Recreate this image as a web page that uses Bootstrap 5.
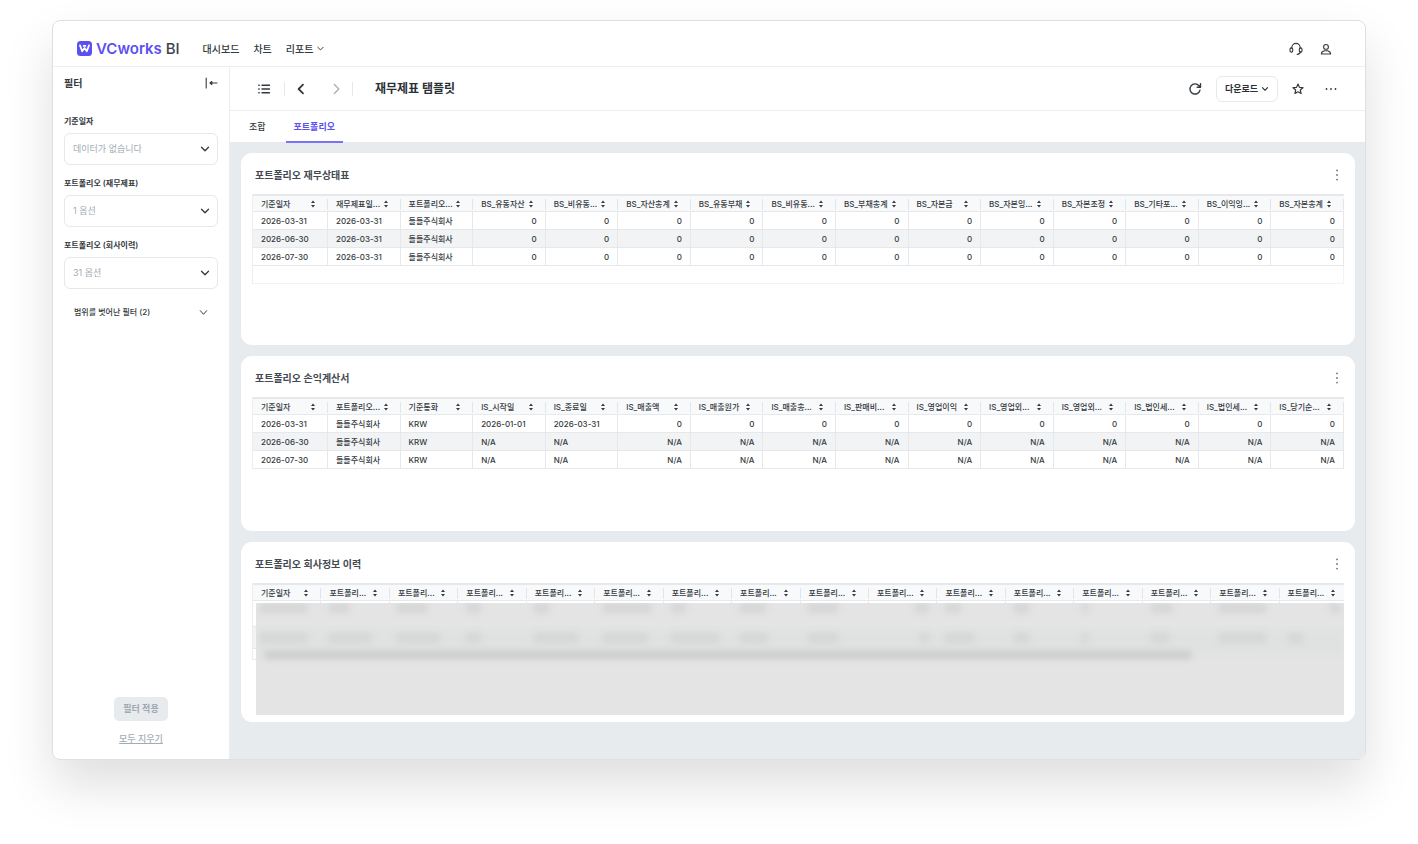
<!DOCTYPE html>
<html lang="ko">
<head>
<meta charset="utf-8">
<meta name="viewport" content="width=device-width, initial-scale=1">
<title>VCworks BI - 재무제표 탬플릿</title>
<link href="https://cdn.jsdelivr.net/npm/bootstrap@5.3.0/dist/css/bootstrap.min.css" rel="stylesheet">
<style>
:root { --ink:#343a40; --muted:#a3abb3; --line:#eceef1; --brand:#5b50f0; --canvas:#e7ebee; }
body { font-family:Inter,"Noto Sans CJK KR",sans-serif; font-size:9px; line-height:16px; color:var(--ink); background:#fff; padding:20px 52px 84px; }
svg { display:block; fill:none; stroke:currentColor; stroke-width:1.4; stroke-linecap:round; stroke-linejoin:round; }
.thin { stroke-width:1.1; }
.thick { stroke-width:1.8; }
a { color:inherit; text-decoration:none; }
.btn { --bs-btn-font-size:9px; --bs-btn-line-height:16px; --bs-btn-color:var(--ink); --bs-btn-border-width:0; }
.app-window { min-height:calc(100vh - 104px); border:1px solid #dcdfe4; border-radius:8px; box-shadow:0 25px 50px rgba(0,0,0,.13); overflow:hidden; }
.app-header { height:46px; padding:10px 32px 0 24px; border-bottom:1px solid var(--line); }
.brand { color:var(--brand); font-size:15px; font-weight:600; gap:4px; }
.brand .suffix { color:#3d434a; font-weight:500; }
.menu { font-size:10px; font-weight:500; gap:14px; margin-left:23px; }
.filters { width:177px; padding:8px 11px 12px; border-right:1px solid var(--line); }
.filters h2 { font-size:10px; line-height:16px; font-weight:600; }
.filter-label { font-size:8px; font-weight:600; line-height:16px; margin-bottom:4px; }
.filters .form-select { height:32px; padding:0 24px 0 8px; font-size:9px; color:var(--muted); border:1px solid #e6e8eb; border-radius:6px; background-size:10px 10px; background-position:right 7px center;
  --bs-form-select-bg-img:url("data:image/svg+xml,%3csvg xmlns='http://www.w3.org/2000/svg' viewBox='0 0 10 10'%3e%3cpath fill='none' stroke='%23343a40' stroke-width='1.3' stroke-linecap='round' stroke-linejoin='round' d='M1.5 3.2 5 6.8 8.5 3.2'/%3e%3c/svg%3e"); }
.filter-stack { gap:10px; margin-top:22px; }
.more-filters { font-size:8px !important; font-weight:500; padding:0 10px; margin-top:15px; }
.apply { --bs-btn-disabled-bg:#e7ebee; --bs-btn-disabled-color:#a0a8b0; --bs-btn-disabled-opacity:1; font-weight:600; height:24px; padding:0 9px; border-radius:5px; }
.clear-all { color:var(--muted); font-weight:500; text-decoration:underline; margin-top:10px; }
.report { min-width:0; }
.toolbar { height:44px; padding:0 27px; border-bottom:1px solid var(--line); }
.toolbar h1 { font-size:12px; font-weight:700; line-height:20px; margin:0 0 0 22px; color:#2b3035; }
.pager { gap:9px; margin-left:13px; }
.pager .next { margin-left:12px; color:#a9b0b8; }
.actions { gap:14px; }
.actions .more { margin-left:6px; }
.bar { width:1px; height:14px; background:#e6e8eb; }
.download { --bs-btn-border-width:1px; --bs-btn-border-color:#e6e8eb; --bs-btn-color:#2b3035; font-weight:700; height:26px; padding:0 8px; border-radius:6px; gap:3px; }
.sheet-tabs { height:31px; padding:0 11px; gap:12px; }
.sheet-tabs .nav-link { padding:0 8px; line-height:31px; color:var(--ink); font-weight:500; }
.sheet-tabs .nav-link.active { height:32px; color:var(--brand); font-weight:600; border-bottom:2px solid #7b73f7; position:relative; }
.canvas { background:var(--canvas); padding:11px 10px 37px 11px; gap:11px; }
.panel { background:#fff; border-radius:11px; padding:14px 11px 7px; min-height:180px; }
.panel.tall { min-height:192px; } .panel.mid { min-height:175px; }
.panel h2 { font-size:10px; font-weight:600; line-height:16px; margin:0 0 0 3px; color:#444a51; }
.panel-head { margin-bottom:11px; padding-right:2px; }
.panel-head .btn { color:#6c737a; }
.grid-box { overflow:hidden; }
.grid { width:100%; table-layout:fixed; border-collapse:separate; border-spacing:0; font-size:8px; font-weight:500; line-height:14px; border-left:1px solid var(--line); }
.grid th, .grid td { height:18px; padding:0 8px; border-bottom:1px solid #e6e8eb; border-right:1px solid #e6e8eb; white-space:nowrap; overflow:hidden; }
.grid th { font-weight:500; background:linear-gradient(90deg,transparent calc(100% - 1px),#e2e5e9 0) 0 3px/100% 11px no-repeat #f8f9fb; border-top:2px solid #e6e8eb; border-right:0; }
.grid th:first-child { width:75px; }
.grid tbody tr:nth-child(even) td { background:#f1f3f5; }
.grid .num { text-align:right; }
.grid tbody .blank, .grid tbody tr:nth-child(even) .blank { border-color:#f1f3f5; background:#fff; }
.grid.wide { width:calc(100% + 4px); } .grid.wide th:first-child { width:auto; }
.grid.wide td { height:26px; } .grid.wide tr:nth-child(2) td { height:22px; } .grid.wide tr:nth-child(3) td { height:11px; }
.masked { position:relative; height:132px; }
.veil { position:absolute; inset:20px 0 0 4px; background:#e4e4e4; overflow:hidden; }
.veil .band { position:absolute; inset:27px 0 auto; height:24px; background:#e0e1e1; filter:blur(3px); }
.veil .smears { position:absolute; inset:0 -4px auto -4px; display:grid; grid-template-columns:repeat(16,1fr); grid-template-rows:12px 12px; row-gap:18px; filter:blur(3px); }
.veil .smears i { height:10px; background:#d5d6d6; margin:0 8px; }
.veil .smears i.end { justify-self:end; }
.veil .track { position:absolute; inset:48px 14% auto 8px; height:8px; background:#cbcbcb; border-radius:4px; filter:blur(3px); }
</style>
</head>
<body>
<div class="app-window d-flex flex-column">
  <header class="app-header d-flex align-items-center">
    <a href="#" class="brand d-flex align-items-center">
      <svg width="15" height="15" viewBox="0 0 15 15"><rect width="15" height="15" rx="3.5" fill="#5b50f0" stroke="none"/><path d="M3 4.4 5.2 10.2 7.5 7 9.8 10.2 12 4.4M6.6 4.9h1.8" stroke="#fff" stroke-width="1.8"/></svg>
      <span>VCworks <span class="suffix">BI</span></span>
    </a>
    <nav class="menu d-flex align-items-center">
      <a href="#">대시보드</a><a href="#">차트</a>
      <a href="#" class="d-flex align-items-center gap-1">리포트 <svg width="7" height="7" viewBox="0 0 10 10"><path d="M1.2 3.2 5 7 8.8 3.2"/></svg></a>
    </nav>
    <div class="ms-auto d-flex align-items-center gap-3">
      <button class="btn p-0" aria-label="고객지원"><svg class="thin" width="14" height="14" viewBox="0 0 14 14"><path d="M2.8 6.2V5.6a4.2 4.2 0 0 1 8.4 0v.6M11.6 9.7c-.3 1.8-1.4 2.6-3.4 2.7"/><rect x="1" y="5.9" width="2.7" height="4.2" rx="1.3"/><rect x="10.3" y="5.9" width="2.7" height="4.2" rx="1.3"/></svg></button>
      <button class="btn p-0" aria-label="내 계정"><svg class="thin" width="14" height="14" viewBox="0 0 14 14"><circle cx="7" cy="4.9" r="2.4"/><path d="M2.4 12c0-2.3 1.9-3 3.2-3.2h2.8c1.3.2 3.2.9 3.2 3.2z"/></svg></button>
    </div>
  </header>
  <div class="d-flex flex-grow-1">
    <aside class="filters d-flex flex-column flex-shrink-0">
      <div class="d-flex justify-content-between align-items-center">
        <h2 class="m-0">필터</h2>
        <button class="btn p-0" aria-label="필터 접기"><svg class="thin" width="13" height="12" viewBox="0 0 13 12"><path d="M1.2 1v10M5 6h7M6.8 4.5 5 6l1.8 1.5z"/></svg></button>
      </div>
      <div class="filter-stack d-flex flex-column">
        <div><label class="filter-label d-block" for="f1">기준일자</label><select class="form-select" id="f1"><option>데이터가 없습니다</option></select></div>
        <div><label class="filter-label d-block" for="f2">포트폴리오 (재무제표)</label><select class="form-select" id="f2"><option>1 옵션</option></select></div>
        <div><label class="filter-label d-block" for="f3">포트폴리오 (회사이력)</label><select class="form-select" id="f3"><option>31 옵션</option></select></div>
      </div>
      <button class="btn more-filters d-flex justify-content-between align-items-center">범위를 벗어난 필터 (2)<svg class="thin" width="9" height="9" viewBox="0 0 10 10"><path d="M1.5 3 5 7 8.5 3"/></svg></button>
      <div class="mt-auto d-flex flex-column align-items-center">
        <button class="btn apply" disabled>필터 적용</button>
        <a href="#" class="clear-all">모두 지우기</a>
      </div>
    </aside>
    <main class="report flex-grow-1 d-flex flex-column">
      <div class="toolbar d-flex align-items-center">
        <button class="btn p-0" aria-label="목록"><svg width="14" height="14" viewBox="0 0 14 14"><path d="M5 3.3h7.5M5 7h7.5M5 10.7h7.5M1.8 3.3h.4M1.8 7h.4M1.8 10.7h.4"/></svg></button>
        <div class="pager d-flex align-items-center">
          <span class="bar"></span>
          <button class="btn p-0" aria-label="이전"><svg class="thick" width="14" height="14" viewBox="0 0 14 14"><path d="M9 2.6 4.6 7 9 11.4"/></svg></button>
          <button class="btn p-0 next" aria-label="다음"><svg width="14" height="14" viewBox="0 0 14 14"><path d="M5.4 2.6 9.8 7 5.4 11.4"/></svg></button>
          <span class="bar"></span>
        </div>
        <h1>재무제표 탬플릿</h1>
        <div class="actions ms-auto d-flex align-items-center">
          <button class="btn p-0" aria-label="새로고침"><svg width="14" height="14" viewBox="0 0 14 14"><path d="M12 8.2A5.1 5.1 0 1 1 10.9 3.6L12.3 5M12.5 1.8v3.4H9.2"/></svg></button>
          <button class="btn download d-flex align-items-center">다운로드 <svg width="8" height="8" viewBox="0 0 10 10"><path d="M1.8 3.2 5 6.6 8.2 3.2"/></svg></button>
          <button class="btn p-0" aria-label="즐겨찾기"><svg width="12" height="12" viewBox="0 0 14 14"><path d="m7 1.3 1.7 3.8 4.1.4-3.1 2.7.9 4.1L7 10.2l-3.6 2.1.9-4.1-3.1-2.7 4.1-.4z"/></svg></button>
          <button class="btn p-0 more" aria-label="더보기"><svg class="thick" width="14" height="14" viewBox="0 0 14 14"><path d="M2.5 7h.01M7 7h.01M11.5 7h.01"/></svg></button>
        </div>
      </div>
      <nav class="sheet-tabs nav">
        <a class="nav-link" href="#">조합</a>
        <a class="nav-link active" href="#">포트폴리오</a>
      </nav>
      <div class="canvas flex-grow-1 d-flex flex-column">
        <section class="panel tall">
          <div class="panel-head d-flex justify-content-between"><h2>포트폴리오 재무상태표</h2><button class="btn p-0" aria-label="메뉴"><svg class="thick" width="10" height="14" viewBox="0 0 10 14"><path d="M5 2.4h.01M5 7h.01M5 11.6h.01"/></svg></button></div>
          <div class="grid-box"><table class="grid" id="balance"></table></div>
        </section>
        <section class="panel mid">
          <div class="panel-head d-flex justify-content-between"><h2>포트폴리오 손익계산서</h2><button class="btn p-0" aria-label="메뉴"><svg class="thick" width="10" height="14" viewBox="0 0 10 14"><path d="M5 2.4h.01M5 7h.01M5 11.6h.01"/></svg></button></div>
          <div class="grid-box"><table class="grid" id="income"></table></div>
        </section>
        <section class="panel">
          <div class="panel-head d-flex justify-content-between"><h2>포트폴리오 회사정보 이력</h2><button class="btn p-0" aria-label="메뉴"><svg class="thick" width="10" height="14" viewBox="0 0 10 14"><path d="M5 2.4h.01M5 7h.01M5 11.6h.01"/></svg></button></div>
          <div class="grid-box masked">
            <table class="grid wide" id="history"></table>
            <div class="veil" aria-hidden="true"><div class="band"></div><div class="smears"></div><div class="track"></div></div>
          </div>
        </section>
      </div>
    </main>
  </div>
</div>
<script src="https://cdn.jsdelivr.net/npm/bootstrap@5.3.0/dist/js/bootstrap.bundle.min.js"></script>
<script>
const sorter = '<svg width="6" height="8" viewBox="0 0 6 8"><path fill="currentColor" stroke="none" d="M3 .4 5 3H1zM3 7.6 5 5H1z"/></svg>';
function fill(id, heads, rows, numFrom, blank) {
  const th = heads.map(h => `<th scope="col"><div class="d-flex justify-content-between align-items-center pe-1"><span>${h}</span>${sorter}</div></th>`).join('');
  const body = rows.map(r => '<tr>' + r.map((c, i) => `<td${i >= numFrom ? ' class="num"' : ''}>${c}</td>`).join('') + '</tr>').join('');
  const last = blank ? `<tr><td class="blank" colspan="${heads.length}"></td></tr>` : '';
  document.getElementById(id).innerHTML = `<thead><tr>${th}</tr></thead><tbody>${body}${last}</tbody>`;
}
const rep = (v, n) => Array(n).fill(v);
const co = '들들주식회사';
fill('balance', ['기준일자','재무제표일...','포트폴리오...','BS_유동자산','BS_비유동...','BS_자산총계','BS_유동부채','BS_비유동...','BS_부채총계','BS_자본금','BS_자본잉...','BS_자본조정','BS_기타포...','BS_이익잉...','BS_자본총계'],
  ['2026-03-31','2026-06-30','2026-07-30'].map(d => [d, '2026-03-31', co, ...rep('0', 12)]), 3, true);
fill('income', ['기준일자','포트폴리오...','기준통화','IS_시작일','IS_종료일','IS_매출액','IS_매출원가','IS_매출총...','IS_판매비...','IS_영업이익','IS_영업외...','IS_영업외...','IS_법인세...','IS_법인세...','IS_당기순...'],
  [['2026-03-31', co, 'KRW', '2026-01-01', '2026-03-31', ...rep('0', 10)], ['2026-06-30', co, 'KRW', ...rep('N/A', 12)], ['2026-07-30', co, 'KRW', ...rep('N/A', 12)]], 5);
fill('history', ['기준일자', ...rep('포트폴리...', 15)], rep(rep('', 16), 3), 16);
const widths = [[47,20,30,15,15,48,15,26,30,14,16,15,6,21,47,10],[47,42,43,15,44,45,48,28,30,9,29,15,6,18,47,15]];
document.querySelector('.smears').innerHTML = widths.flat().map((w, i) => `<i${i % 16 === 9 || i === 15 ? ' class="end"' : ''} style="width:${w}px"></i>`).join('');
</script>
</body>
</html>
